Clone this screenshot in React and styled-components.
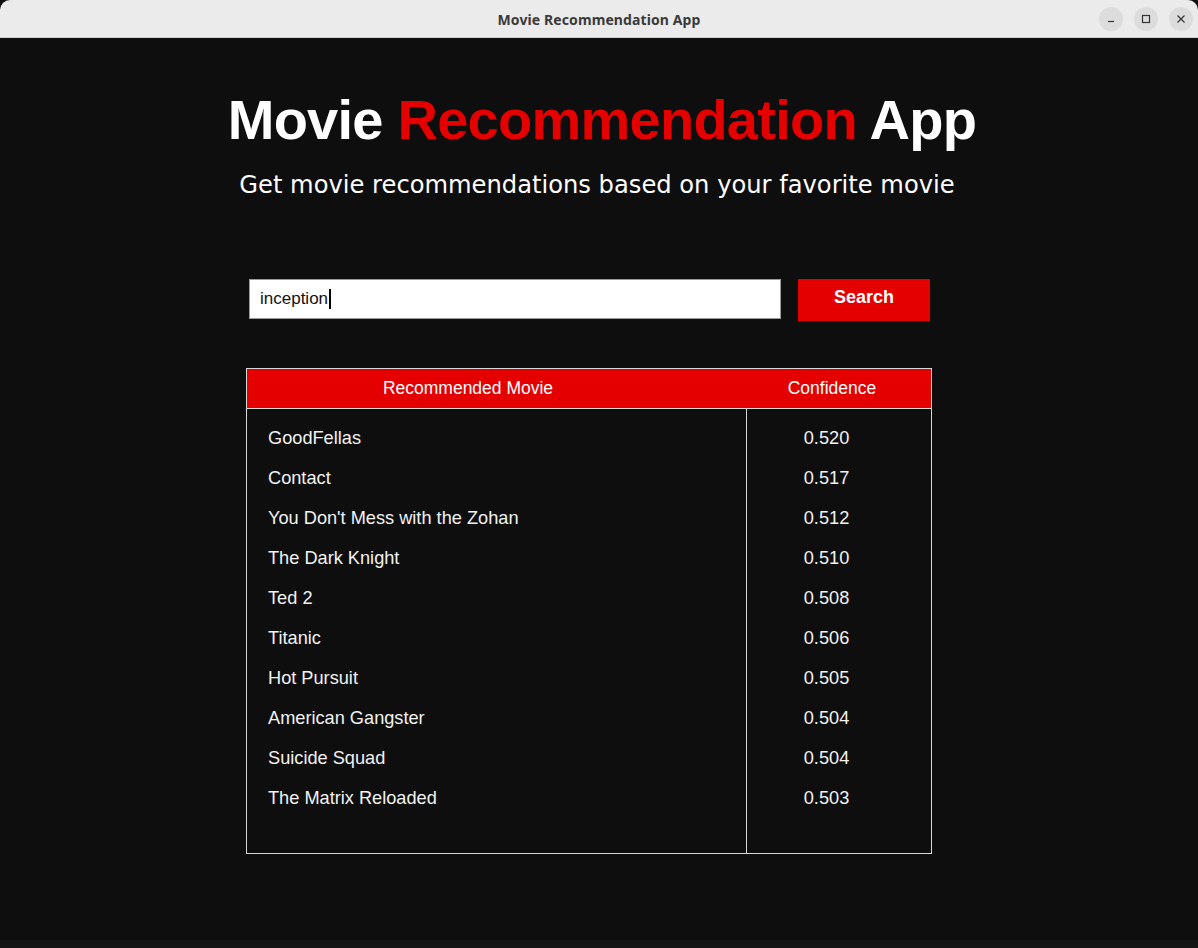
import React from "react";
import styled, { createGlobalStyle } from "styled-components";

const Global = createGlobalStyle`
  html, body { margin: 0; padding: 0; background: #0e0e0e; }
  body { width: 1198px; height: 948px; overflow: hidden; font-family: "Liberation Sans", Arial, sans-serif; }
  #root { width: 1198px; height: 948px; }
`;

const Window = styled.div`
  width: 1198px;
  height: 948px;
  display: flex;
  flex-direction: column;
  background: #0e0e0e;
`;

const TitleBar = styled.div`
  height: 37px;
  flex: none;
  display: grid;
  grid-template-columns: 1fr auto 1fr;
  align-items: center;
  background: #ebebeb;
  border-bottom: 1px solid #cfcfcf;
  border-radius: 10px 10px 0 0;
`;

const TitleText = styled.div`
  grid-column: 2;
  font-family: "Noto Sans", "DejaVu Sans", sans-serif;
  font-weight: 700;
  font-size: 14px;
  color: #3a3a3a;
  letter-spacing: 0.1px;
  padding-top: 2px;
`;

const WinButtons = styled.div`
  grid-column: 3;
  justify-self: end;
  display: flex;
  gap: 11px;
  padding-right: 5px;
`;

const WinButton = styled.div`
  width: 24px;
  height: 24px;
  border-radius: 50%;
  background: #dcdcdc;
  display: flex;
  align-items: center;
  justify-content: center;
`;

const Main = styled.div`
  flex: 1;
  display: flex;
  flex-direction: column;
  align-items: center;
  padding-top: 49px;
`;

const Heading = styled.h1`
  margin: 0 0 0 6px;
  font-family: "Liberation Sans", Arial, sans-serif;
  font-weight: 700;
  font-size: 56px;
  line-height: 66px;
  color: #ffffff;
  letter-spacing: -0.75px;
`;

const Accent = styled.span`
  color: #e50000;
`;

const Subtitle = styled.p`
  margin: 16px 0 0 -4px;
  font-family: "DejaVu Sans", sans-serif;
  font-size: 24.2px;
  line-height: 32px;
  color: #ffffff;
`;

const SearchRow = styled.div`
  margin-top: 78px;
  display: flex;
  align-items: flex-start;
  gap: 17px;
  margin-right: 19px;
`;

const SearchInput = styled.div`
  height: 38px;
  width: 520px;
  background: #ffffff;
  border: 1px solid #9a9a9a;
  display: flex;
  align-items: center;
  padding-left: 10px;
  font-size: 17px;
  color: #111;
`;

const Caret = styled.span`
  display: inline-block;
  width: 2px;
  height: 20px;
  background: #000;
  margin-left: 1px;
`;

const SearchButton = styled.button`
  width: 132px;
  height: 42px;
  border: none;
  background: #e50000;
  color: #ffffff;
  font-family: "Liberation Sans", Arial, sans-serif;
  font-weight: 700;
  font-size: 18px;
  padding: 0 0 6px;
`;

const Table = styled.div`
  margin-top: 47px;
  margin-right: 20px;
  width: 684px;
  border: 1px solid #d8d8d8;
  display: grid;
  grid-template-columns: 500px 1fr;
`;

const HeadCell = styled.div`
  height: 39px;
  background: #e50000;
  border-bottom: 1px solid #d8d8d8;
  color: #ffffff;
  font-size: 17.5px;
  display: flex;
  align-items: center;
  justify-content: center;
  padding-right: ${p => p.$shift || 0}px;
`;

const Column = styled.div`
  padding: 9px 0 35px;
  border-right: ${p => (p.$divider ? "1px solid #d8d8d8" : "none")};
`;

const Cell = styled.div`
  height: 40px;
  display: flex;
  align-items: center;
  font-size: 18.2px;
  color: #f2f2f2;
  justify-content: ${p => (p.$center ? "center" : "flex-start")};
  padding-left: ${p => (p.$center ? 0 : 21)}px;
  padding-right: ${p => (p.$center ? 25 : 0)}px;
`;

const BottomStrip = styled.div`
  height: 8px;
  flex: none;
  background: #151515;
`;

const data = [
  ["GoodFellas", "0.520"],
  ["Contact", "0.517"],
  ["You Don't Mess with the Zohan", "0.512"],
  ["The Dark Knight", "0.510"],
  ["Ted 2", "0.508"],
  ["Titanic", "0.506"],
  ["Hot Pursuit", "0.505"],
  ["American Gangster", "0.504"],
  ["Suicide Squad", "0.504"],
  ["The Matrix Reloaded", "0.503"],
];

export default function App() {
  return (
    <>
      <Global />
      <Window>
        <TitleBar>
          <TitleText>Movie Recommendation App</TitleText>
          <WinButtons>
            <WinButton>
              <svg width="10" height="10" viewBox="0 0 10 10"><path d="M2 7.5h6" stroke="#333" strokeWidth="1.2" /></svg>
            </WinButton>
            <WinButton>
              <svg width="10" height="10" viewBox="0 0 10 10"><rect x="1.5" y="1.5" width="7" height="7" fill="none" stroke="#333" strokeWidth="1.2" /></svg>
            </WinButton>
            <WinButton>
              <svg width="10" height="10" viewBox="0 0 10 10"><path d="M1.5 1.5l7 7M8.5 1.5l-7 7" stroke="#333" strokeWidth="1.2" /></svg>
            </WinButton>
          </WinButtons>
        </TitleBar>
        <Main>
          <Heading>
            Movie <Accent>Recommendation</Accent> App
          </Heading>
          <Subtitle>Get movie recommendations based on your favorite movie</Subtitle>
          <SearchRow>
            <SearchInput>
              inception<Caret />
            </SearchInput>
            <SearchButton>Search</SearchButton>
          </SearchRow>
          <Table>
            <HeadCell $shift={58}>Recommended Movie</HeadCell>
            <HeadCell $shift={14}>Confidence</HeadCell>
            <Column $divider>
              {data.map(([m]) => (
                <Cell key={m}>{m}</Cell>
              ))}
            </Column>
            <Column>
              {data.map(([m, c]) => (
                <Cell key={m} $center>{c}</Cell>
              ))}
            </Column>
          </Table>
        </Main>
        <BottomStrip />
      </Window>
    </>
  );
}
